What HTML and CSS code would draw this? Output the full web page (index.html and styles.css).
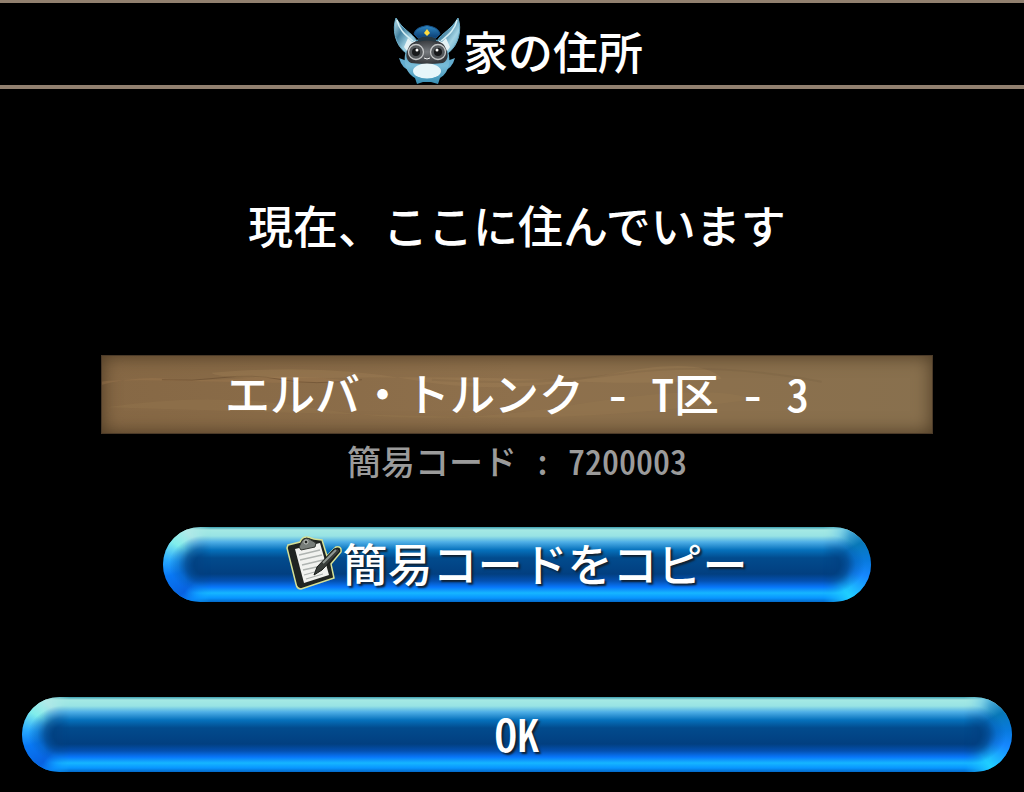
FILE: index.html
```html
<!DOCTYPE html>
<html lang="ja">
<head>
    <meta charset="UTF-8">
    <meta name="viewport" content="width=device-width, initial-scale=1.0">
    <title>家の住所</title>
    <link rel="stylesheet" href="styles.css">
</head>
<body>
    <header class="title-bar">
        <svg class="mascot" viewBox="0 0 68 68" aria-hidden="true">
            <defs>
                <linearGradient id="ear" x1="0" y1="0" x2="1" y2="1">
                    <stop offset="0" stop-color="#c5e5ee"/>
                    <stop offset=".35" stop-color="#42809f"/>
                    <stop offset=".65" stop-color="#a2d3e4"/>
                    <stop offset="1" stop-color="#4b9cc0"/>
                </linearGradient>
                <linearGradient id="fur" x1="0" y1="0" x2="0" y2="1">
                    <stop offset="0" stop-color="#4b92b2"/>
                    <stop offset=".6" stop-color="#78bcd8"/>
                    <stop offset="1" stop-color="#378db2"/>
                </linearGradient>
                <radialGradient id="mask">
                    <stop offset="0" stop-color="#777b7f"/>
                    <stop offset="1" stop-color="#35383c"/>
                </radialGradient>
                <linearGradient id="cap" x1="0" y1="0" x2="0" y2="1">
                    <stop offset="0" stop-color="#2f8ac6"/>
                    <stop offset="1" stop-color="#0b3d73"/>
                </linearGradient>
            </defs>
            <path d="M3 1C-1 12 2 28 13 36L24 24C19 16 9 12 3 1Z" fill="url(#ear)" stroke="#6badc8"/>
            <path d="M65 1C69 12 66 28 55 36L44 24C49 16 59 12 65 1Z" fill="url(#ear)" stroke="#6badc8"/>
            <path d="M4 3C6 12 11 17 20 24M64 3C62 12 57 17 48 24" fill="none" stroke="#d7f1f6" stroke-width="1.5"/>
            <path d="M14 44L6 41Q9 52 18 54M54 44L62 41Q59 52 50 54" fill="#64add0"/>
            <path d="M15 29C20 19 48 19 53 29C59 41 57 55 47 61L45 67L38 65H30L24 67L22 61C11 55 9 40 15 29Z" fill="url(#fur)"/>
            <path d="M11 30L15 21L19 25L23 23L16 37ZM57 30L53 21L49 25L45 23L52 37Z" fill="#e5f2f5"/>
            <path d="M17 28C23 21 45 21 51 28C56 36 56 43 50 46Q34 48 18 46C12 43 12 36 17 28Z" fill="url(#mask)"/>
            <path d="M25 18H43L43 25Q34 22 25 25Z" fill="#263843"/>
            <path d="M21 17Q22 12 28 10Q34 7 40 10Q46 12 47 17L43 21Q34 17 25 21Z" fill="url(#cap)" stroke="#164d80"/>
            <path d="M34 12L37 16L34 19L31 16Z" fill="#ffdc3f"/>
            <circle cx="23" cy="35" r="7.5" fill="#54585b" stroke="#c5c7c8" stroke-width="1.3"/>
            <circle cx="45" cy="35" r="7.5" fill="#54585b" stroke="#c5c7c8" stroke-width="1.3"/>
            <circle cx="23" cy="35" r="4" fill="#17191b"/>
            <circle cx="45" cy="35" r="4" fill="#17191b"/>
            <circle cx="24" cy="33" r="1.5" fill="#fff"/>
            <circle cx="44" cy="33" r="1.5" fill="#fff"/>
            <path d="M31 41Q34 43 37 41" fill="none" stroke="#eef0f0"/>
            <ellipse cx="34" cy="54" rx="14" ry="7.5" fill="#e7f6fa"/>
        </svg>
        <h1 class="title">家の住所</h1>
    </header>
    <main class="content">
        <p class="message">現在、ここに住んでいます</p>
        <div class="address">
            <svg class="wood" viewBox="0 0 830 78" preserveAspectRatio="none" aria-hidden="true">
                <path d="M0 29Q35 20 65 23T150 22T260 27L180 27T70 25T0 33Z" fill="#a47f54" opacity=".3"/>
                <path d="M60 24Q90 26 120 22T180 24T260 24" fill="none" stroke="#5e442b" opacity=".5"/>
                <path d="M110 17Q220 7 310 24T500 20T620 23Q550 30 460 25T240 22T110 17Z" fill="#a6845a" opacity=".3"/>
                <path d="M330 24Q430 31 520 18T720 26" fill="none" stroke="#684f35" stroke-width="2" opacity=".15"/>
                <path d="M5 52Q110 35 220 54T470 50T650 44Q500 65 370 62T5 52Z" fill="#a28054" opacity=".2"/>
            </svg>
            <span class="address-text">エルバ・トルンク - T区 - 3</span>
        </div>
        <p class="code">簡易コード : 7200003</p>
        <button type="button" class="btn copy-btn">
            <svg class="clipboard" viewBox="0 0 56 56" aria-hidden="true">
                <path d="M2 10L14 7Q17 0 25 3L28 4L36 5L41 21L50 12Q56 11 55 17L45 29L48 43L15 54Q11 54 10 49L1 13Z" fill="#202421" stroke="#d5e096" stroke-width="1.5"/>
                <path d="M9 14L34 8L43 40L18 48Z" fill="#f1f2ef"/>
                <path d="M13 20L34 15M14 25L36 20M16 30L37 25M17 35L35 31M18 40L32 36M20 44L37 39" stroke="#aeb3b0" stroke-width="1.3"/>
                <path d="M13 12L16 6Q20 1 25 5L30 8L29 12L15 15Z" fill="#777d79" stroke="#303430"/>
                <circle cx="20" cy="7" r="2" fill="#202421" stroke="#c9cec9"/>
                <path d="M28 40L31 32L48 14Q52 12 54 16L36 35Z" fill="#373c39" stroke="#171b19"/>
                <path d="M37 28L50 15" stroke="#929a95" stroke-width="2"/>
            </svg>
            <span>簡易コードをコピー</span>
        </button>
        <button type="button" class="btn ok-btn">OK</button>
    </main>
</body>
</html>
```
FILE: styles.css
```css
* {
    box-sizing: border-box;
}
body {
    display: flex;
    flex-direction: column;
    min-height: 100vh;
    margin: 0;
    background: #000;
    color: #fff;
    font-family: "Noto Sans CJK JP", sans-serif;
    /* half-width latin letters and digits */
    font-feature-settings: "hwid";
    font-size: 45px;
    font-weight: 500;
    line-height: 60px;
}
.title-bar {
    display: flex;
    justify-content: center;
    align-items: center;
    height: 89px;
    padding: 14px 0 0 12px;
    border-top: 3px solid #91806f;
    border-bottom: 4px solid #91806f;
}
.mascot {
    width: 68px;
    height: 68px;
    margin-right: 2px;
}
.title, .message, .code {
    margin: 0;
    font-weight: 500;
}
.title {
    font-size: 45px;
}
.content {
    display: flex;
    flex: 1;
    flex-direction: column;
    align-items: center;
    padding: 106px 12px 20px 22px;
}
.message {
    text-align: center;
}
.address {
    position: relative;
    display: flex;
    justify-content: center;
    align-items: center;
    width: 84%;
    height: 79px;
    margin-top: 100px;
    padding-bottom: 4px;
    border: 1px solid #4b3a28;
    background: linear-gradient(90deg, #866845, #8e704c 50%, #88704e);
    box-shadow: inset 0 0 18px #4b3923;
}
.address-text {
    position: relative;
}
.wood {
    position: absolute;
    inset: 0;
    width: 100%;
    height: 100%;
}
.code {
    color: #9b9b9b;
    font-size: 34px;
    line-height: 54px;
}
.btn {
    position: relative;
    isolation: isolate;
    display: flex;
    justify-content: center;
    align-items: center;
    height: 75px;
    padding: 0 0 4px;
    overflow: hidden;
    border: 0;
    border-radius: 38px;
    background: linear-gradient(#3c9cad 0, #a4e9e4 3px, #98e3e4 9px, #4eaee6 15px, #0671bc 23px, #024b8d 31px, #023f80 47px, #0451b2 54px, #0876fa 60px, #16b6ff 66px, #0895ff 71px, #0368c8 75px);
    color: #fff;
    font: inherit;
    font-feature-settings: inherit;
    text-shadow: 2px 2px 2px #102030;
    cursor: pointer;
}
/* rounded ends */
.btn::before, .btn::after {
    content: "";
    position: absolute;
    z-index: -1;
    top: 0;
    width: 48px;
    height: 75px;
}
.btn::before {
    left: 0;
    background:
        radial-gradient(ellipse 42px 30px at 100% 50%, #023f80 40%, #034b92d9 60%, #0560b880 78%, transparent),
        conic-gradient(from 180deg at 100% 50%, #16b6ff 0deg, #0c8cff 25deg, #0862e0 45deg, #0878f5 75deg, #27a8ff 95deg, #80edeb 120deg, #b4e9e8 145deg, #a4e9e4 180deg);
    mask-image: linear-gradient(90deg, #000 45%, transparent);
}
.btn::after {
    right: 0;
    background:
        radial-gradient(ellipse 42px 30px at 0 50%, #023f80 40%, #034b92d9 60%, #0560b880 78%, transparent),
        conic-gradient(from 0deg at 0 50%, #a4e9e4 0deg, #6cc6e6 28deg, #0878b8 60deg, #087ade 85deg, #1687ff 105deg, #21d0ff 140deg, #16b6ff 180deg);
    mask-image: linear-gradient(270deg, #000 45%, transparent);
}
.copy-btn {
    width: calc(100% * 5 / 7);
    margin-top: 39px;
}
.clipboard {
    width: 56px;
    height: 56px;
}
.ok-btn {
    width: 100%;
    margin-top: auto;
}
```
